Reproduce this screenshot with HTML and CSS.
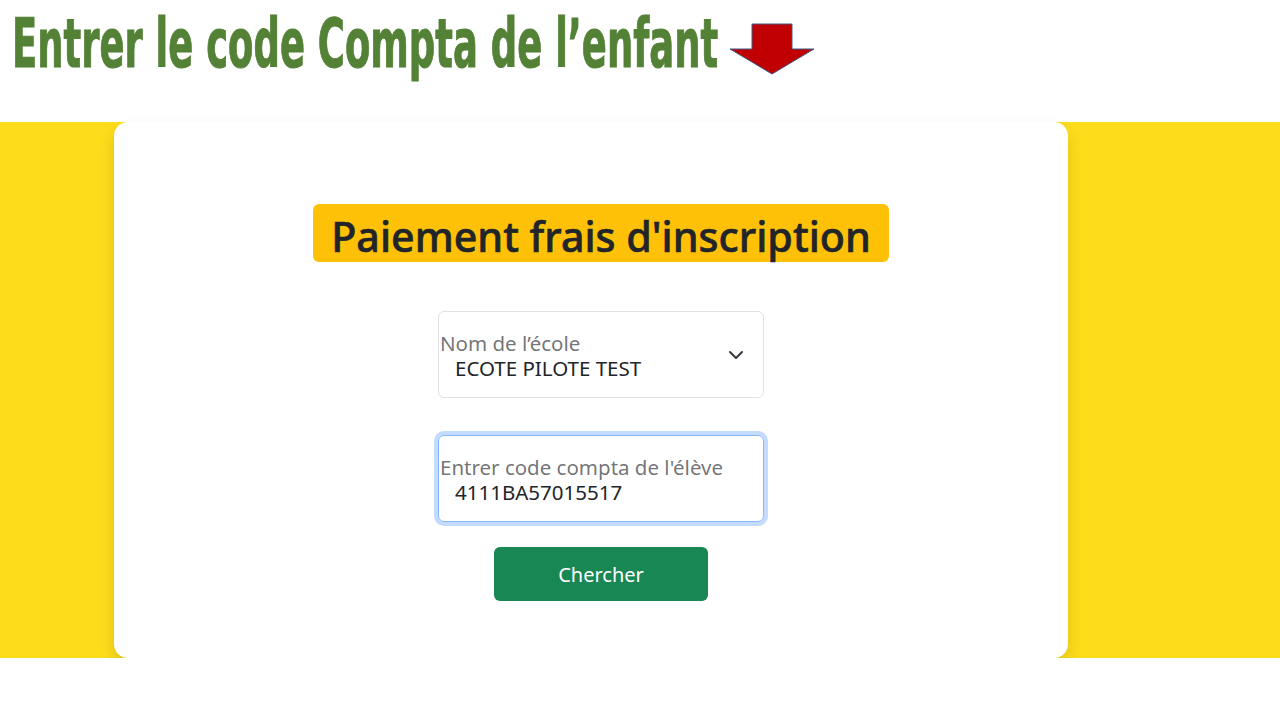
FILE: index.html
```html
<!DOCTYPE html>
<html lang="fr">
<head>
  <meta charset="utf-8">
  <title>Paiement frais d'inscription</title>
  <link rel="stylesheet" href="styles.css">
</head>
<body>
  <header class="top">
    <div class="top-text"><span>Entrer le code Compta de l’enfant</span></div>
    <svg class="top-arrow" width="88" height="54" viewBox="0 0 88 54">
      <polygon points="23,1 63,1 63,26 85,26 43,51 1,26 23,26" fill="#c00000" stroke="#3e5a8a" stroke-width="1"/>
    </svg>
  </header>

  <section class="band">
    <div class="card">
      <h2 class="badge">Paiement frais d'inscription</h2>

      <form class="search" id="searchForm">
        <div class="field">
          <label for="ecole">Nom de l’école</label>
          <select id="ecole">
            <option>ECOTE PILOTE TEST</option>
          </select>
          <svg class="chevron" width="16" height="16" viewBox="0 0 16 16">
            <path d="M2 5l6 6 6-6" fill="none" stroke="#343a40" stroke-width="2" stroke-linecap="round" stroke-linejoin="round"/>
          </svg>
        </div>

        <div class="field focused">
          <label for="code">Entrer code compta de l'élève</label>
          <input type="text" id="code" value="4111BA57015517">
        </div>

        <button type="submit">Chercher</button>
      </form>
    </div>
  </section>
</body>
</html>
```

FILE: styles.css
```css
body {
  margin: 0;
  background: #fff;
  font-family: "Noto Sans", "Open Sans", sans-serif;
  color: #212529;
}

.top {
  height: 122px;
  display: flex;
  align-items: flex-start;
  padding-left: 12px;
  box-sizing: border-box;
}

.top-text {
  width: 717px;
  margin-top: 10px;
  white-space: nowrap;
  font-family: "DejaVu Sans Condensed", "DejaVu Sans", sans-serif;
  font-stretch: condensed;
  font-weight: bold;
  font-size: 68px;
  line-height: 68px;
  color: #538135;
  -webkit-text-stroke: 1px #538135;
}

.top-text span {
  display: inline-block;
  transform: scaleX(0.604);
  transform-origin: left center;
}

.top-arrow {
  margin-top: 23px;
}

.band {
  background: #fddc1c;
  height: 536px;
}

.card {
  width: 954px;
  height: 536px;
  margin-left: 114px;
  background: #fff;
  border-radius: 14px;
  box-shadow: 0 8px 16px rgba(0, 0, 0, 0.12);
  box-sizing: border-box;
  padding: 82px 0 0 20px;
  display: flex;
  flex-direction: column;
  align-items: center;
}

.badge {
  margin: 0;
  background: #ffc107;
  border-radius: 6px;
  padding: 0 18px;
  height: 58px;
  line-height: 64px;
  font-size: 41.2px;
  font-weight: 500;
  color: #212529;
  -webkit-text-stroke: 0.6px #212529;
}

.search {
  margin-top: 49px;
  display: flex;
  flex-direction: column;
  align-items: center;
}

.field {
  position: relative;
  width: 326px;
  height: 87px;
  box-sizing: border-box;
  border: 1px solid #dee2e6;
  border-radius: 6px;
  padding: 19px 0 0 1px;
  display: flex;
  flex-direction: column;
  margin-bottom: 37px;
}

.field.focused {
  border-color: #86b7fe;
  box-shadow: 0 0 0 4px rgba(13, 110, 253, 0.25);
  margin-bottom: 25px;
}

.field label {
  font-size: 20.5px;
  line-height: 25px;
  color: rgba(33, 37, 41, 0.65);
}

.field select,
.field input {
  appearance: none;
  border: none;
  outline: none;
  background: transparent;
  padding: 0 0 0 15px;
  margin: 0;
  font-family: inherit;
  font-size: 20.5px;
  line-height: 25px;
  height: 25px;
  color: #212529;
}

.chevron {
  position: absolute;
  right: 19px;
  top: 35px;
}

button {
  width: 214px;
  height: 54px;
  border: none;
  border-radius: 6px;
  background: #198754;
  color: #fff;
  font-family: inherit;
  font-size: 20px;
  cursor: pointer;
}
```
